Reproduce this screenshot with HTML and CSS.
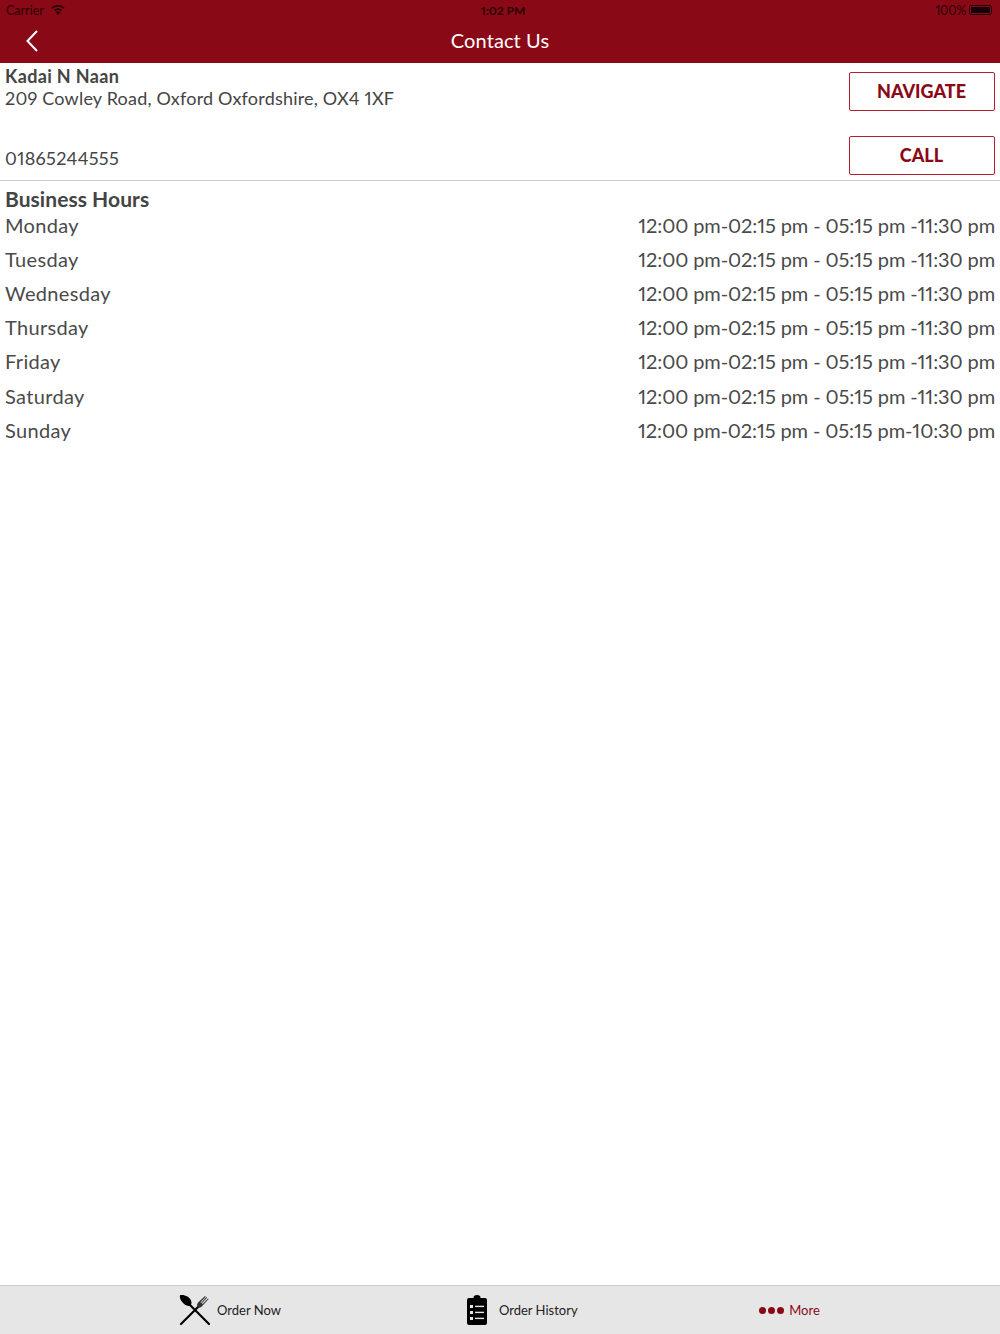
FILE: index.html
```html
<!DOCTYPE html>
<html lang="en">
<head>
<meta charset="UTF-8" />
<meta name="viewport" content="width=device-width, initial-scale=1" />
<title>Contact Us</title>
<link rel="stylesheet" href="styles.css">
</head>
<body>
<div class="app">
  <header class="top">
    <div class="status-bar">
      <div class="status-left">
        <span>Carrier</span>
        <svg class="wifi" width="14" height="10" viewBox="0 0 14 10"><path d="M7 10 4.6 7.2a3.6 3.6 0 0 1 4.8 0z" fill="#2a0206"/><path d="M3.4 5.7a5.6 5.6 0 0 1 7.2 0" fill="none" stroke="#2a0206" stroke-width="1.7"/><path d="M1 3.1a9 9 0 0 1 12 0" fill="none" stroke="#2a0206" stroke-width="1.7"/></svg>
      </div>
      <span class="status-time">1:02 PM</span>
      <div class="status-right">
        <span class="status-pct">100%</span>
        <span class="battery"><span class="battery-fill"></span></span>
      </div>
    </div>
    <div class="nav-bar">
      <svg class="back" width="12" height="22" viewBox="0 0 12 22"><path d="M11 1 1.5 11 11 21" fill="none" stroke="#fff" stroke-width="2"/></svg>
      <h1>Contact Us</h1>
    </div>
  </header>

  <main>
    <section class="contact">
      <div class="contact-row first">
        <div>
          <p class="name">Kadai N Naan</p>
          <p class="address">209 Cowley Road, Oxford Oxfordshire, OX4 1XF</p>
        </div>
        <button class="action">NAVIGATE</button>
      </div>
      <div class="contact-row second">
        <p class="phone">01865244555</p>
        <button class="action">CALL</button>
      </div>
    </section>

    <section class="hours">
      <h2>Business Hours</h2>
      <div class="hour-row"><span>Monday</span><span class="times">12:00 pm-02:15 pm - 05:15 pm -11:30 pm</span></div>
      <div class="hour-row"><span>Tuesday</span><span class="times">12:00 pm-02:15 pm - 05:15 pm -11:30 pm</span></div>
      <div class="hour-row"><span>Wednesday</span><span class="times">12:00 pm-02:15 pm - 05:15 pm -11:30 pm</span></div>
      <div class="hour-row"><span>Thursday</span><span class="times">12:00 pm-02:15 pm - 05:15 pm -11:30 pm</span></div>
      <div class="hour-row"><span>Friday</span><span class="times">12:00 pm-02:15 pm - 05:15 pm -11:30 pm</span></div>
      <div class="hour-row"><span>Saturday</span><span class="times">12:00 pm-02:15 pm - 05:15 pm -11:30 pm</span></div>
      <div class="hour-row"><span>Sunday</span><span class="times">12:00 pm-02:15 pm - 05:15 pm-10:30 pm</span></div>
    </section>
  </main>

  <nav class="tabs">
    <div class="tab tab-order">
      <svg width="32" height="32" viewBox="0 0 32 32">
        <path d="M30 30 11 11" stroke="#000" stroke-width="2.2" stroke-linecap="round"/>
        <path d="M1 1.2C5 0 10.4 2.6 12 6.4c1 2.6.4 5-1.4 5.4-2.4.5-5.8-1-7.8-4.2C1.2 5.4.4 2.8 1 1.2z" fill="#000"/>
        <path d="M2 30 20.5 11.5" stroke="#000" stroke-width="2.2" stroke-linecap="round"/>
        <path d="M19 13c-1.6-1.6-1-3.4.6-5L26 2l.7.7-5.3 5.7.7.7L27.4 3l.7.7-5.2 5.6.7.7L29 4.4l.7.7-5.8 6.2c-1.6 1.8-3.5 3.3-4.9 1.7z" fill="#333"/>
      </svg>
      <span>Order Now</span>
    </div>
    <div class="tab tab-history">
      <svg width="20" height="30" viewBox="0 0 20 30">
        <path d="M2 3h4.5V2.5a3.5 2.5 0 0 1 7 0V3H18a2 2 0 0 1 2 2v23a2 2 0 0 1-2 2H2a2 2 0 0 1-2-2V5a2 2 0 0 1 2-2z" fill="#000"/>
        <g fill="#e6e6e6">
          <rect x="3" y="10" width="3" height="3"/><rect x="8" y="10.7" width="9" height="1.4"/>
          <rect x="3" y="16" width="3" height="3"/><rect x="8" y="16.7" width="9" height="1.4"/>
          <rect x="3" y="22" width="3" height="3"/><rect x="8" y="22.7" width="9" height="1.4"/>
        </g>
      </svg>
      <span>Order History</span>
    </div>
    <div class="tab tab-more">
      <span class="dots"><i></i><i></i><i></i></span>
      <span>More</span>
    </div>
  </nav>
</div>
</body>
</html>
```

FILE: styles.css
```css
*, *::before, *::after {
  box-sizing: border-box;
}
body {
  margin: 0;
  font-family: 'Lato', 'Liberation Sans', sans-serif;
  font-variant-numeric: proportional-nums;
  background: white;
  color: #444;
}
p, h1, h2 {
  margin: 0;
}
.app {
  width: 1000px;
  height: 1334px;
  display: flex;
  flex-direction: column;
}
/* Header */
.top {
  height: 63px;
  background: #8a0917;
  flex-shrink: 0;
}
.status-bar {
  height: 20px;
  padding: 0 8px 0 6px;
  display: flex;
  justify-content: space-between;
  align-items: center;
  font-size: 12.5px;
  color: #2a0206;
}
.status-left {
  width: 443px;
  display: flex;
  align-items: center;
  gap: 7px;
}
.status-right {
  width: 443px;
  display: flex;
  align-items: center;
  justify-content: flex-end;
  gap: 3px;
}
.status-pct {
  font-size: 12.5px;
  letter-spacing: -0.2px;
}
.status-time {
  font-size: 12px;
  font-weight: 700;
  margin-left: 8px;
}
.battery {
  width: 23px;
  height: 10px;
  border: 1px solid #2a0206;
  border-radius: 2px;
  padding: 1px;
  display: flex;
}
.battery-fill {
  flex: 1;
  background: #12010a;
}
.nav-bar {
  height: 40px;
  position: relative;
  display: flex;
  align-items: center;
  justify-content: center;
  padding-bottom: 1px;
}
.nav-bar h1 {
  font-size: 20px;
  font-weight: 400;
  letter-spacing: 0.1px;
  color: white;
}
.back {
  position: absolute;
  left: 26px;
  top: 10px;
}
/* Contact block */
.contact {
  margin-top: 3px;
  height: 115px;
  padding: 0 5px;
  border-bottom: 1px solid #ccc;
}
.contact-row {
  display: flex;
  justify-content: space-between;
}
.first {
  height: 70px;
}
.first .action {
  margin-top: 6px;
}
.second {
  height: 44px;
  align-items: flex-end;
  padding-bottom: 5px;
}
.name {
  font-size: 18px;
  font-weight: 700;
  letter-spacing: 0.35px;
  line-height: 21px;
}
.address {
  font-size: 18px;
  letter-spacing: 0.2px;
  line-height: 23px;
}
.phone {
  font-size: 18px;
  letter-spacing: 0.34px;
  line-height: 22px;
  margin-bottom: 6px;
}
.action {
  width: 146px;
  height: 39px;
  padding: 0 1px 1px 0;
  background: white;
  border: 1px solid #b3202f;
  border-radius: 2px;
  color: #8a0917;
  font-family: inherit;
  font-size: 18px;
  font-weight: 900;
}
/* Hours */
.hours {
  padding: 7px 5px 0;
}
.hours h2 {
  font-size: 21px;
  font-weight: 700;
  letter-spacing: 0.05px;
  line-height: 22px;
}
.hour-row {
  display: flex;
  justify-content: space-between;
  height: 34.1px;
  align-items: center;
  font-size: 20px;
  letter-spacing: 0.33px;
  color: #4a4a4a;
}
.hour-row:first-of-type {
  margin-top: -2px;
}
.times {
  letter-spacing: -0.11px;
}
/* Tab bar */
main {
  flex: 1;
}
.tabs {
  height: 49px;
  flex-shrink: 0;
  background: #e6e6e6;
  border-top: 1px solid #ccc;
  display: flex;
  align-items: center;
  font-size: 13px;
  color: #222;
}
.tab {
  display: flex;
  align-items: center;
}
.tab-order {
  margin-left: 179px;
  gap: 6px;
}
.tab-history {
  margin-left: 186px;
  gap: 12px;
}
.tab-more {
  margin-left: 181px;
  gap: 5.6px;
  color: #8a0917;
}
.dots {
  display: flex;
  gap: 2px;
}
.dots i {
  width: 7px;
  height: 7px;
  border-radius: 50%;
  background: #8a0917;
}
```
